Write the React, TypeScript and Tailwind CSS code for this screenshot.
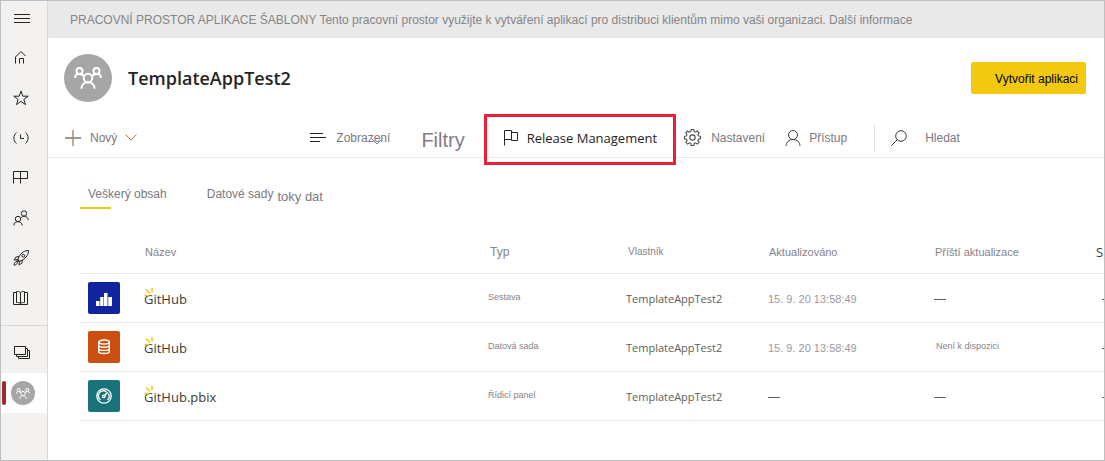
import type { ReactNode } from 'react';
import { clsx } from 'clsx';

interface IconProps {
  className?: string;
  children: ReactNode;
}

function Icon({ className = 'size-4', children }: IconProps) {
  return (
    <svg
      viewBox="0 0 16 16"
      fill="none"
      stroke="currentColor"
      strokeWidth={1}
      aria-hidden="true"
      className={clsx('shrink-0', className)}
    >
      {children}
    </svg>
  );
}

function ChevronDown({ className }: { className?: string }) {
  return (
    <svg
      viewBox="0 0 12 7"
      fill="none"
      stroke="currentColor"
      aria-hidden="true"
      className={clsx('h-[7px] w-3 shrink-0', className)}
    >
      <path d="M.5.5 6 6 11.5.5" />
    </svg>
  );
}

function WorkspaceAvatar({ className, iconClass }: { className: string; iconClass: string }) {
  return (
    <span
      className={clsx(
        'flex shrink-0 items-center justify-center rounded-full bg-[#a6a6a6] text-white',
        className
      )}
    >
      <svg
        viewBox="0 0 28 22"
        fill="none"
        stroke="currentColor"
        strokeWidth={2}
        aria-hidden="true"
        className={iconClass}
      >
        <circle cx="5.500" cy="4" r="3" />
        <circle cx="22.500" cy="4" r="3" />
        <circle cx="14" cy="11" r="4.300" />
        <path d="M1 11c0-2.600 2-4 4.500-4 1.800 0 3.500.8 4.500 2.500M27 11c0-2.600-2-4-4.500-4-1.800 0-3.500.8-4.500 2.500M7.500 21.800c0-4 2.800-6.500 6.500-6.500s6.500 2.500 6.500 6.500" />
      </svg>
    </span>
  );
}

const navItems = [
  {
    label: 'Home',
    icon: <path d="M2.500 13.500V7L8 1.500 12.500 6M6.500 13.500v-5h4v5" />,
  },
  {
    label: 'Favorites',
    icon: <path d="m8 1 1.800 5.200h5.400l-4.300 3.200 1.600 5.200L8 11.400l-4.500 3.200 1.600-5.200L.8 6.200h5.400z" />,
  },
  {
    label: 'Recent',
    icon: <path d="M3.500 2.500C0 5.500 0 10.500 3.500 13.500M12.500 2.500c3.500 3 3.500 8 0 11M7.500 4.500v4H11" />,
  },
  {
    label: 'Apps',
    icon: <path d="M.5 13.500v-12h14v7H.5M7.500 1.500v12" />,
  },
  {
    label: 'Shared with me',
    icon: (
      <>
        <circle cx="11" cy="3.500" r="2.700" />
        <circle cx="5" cy="9" r="2.700" />
        <path d="M.8 15.500c.2-2.400 1.800-3.800 4.200-3.800s4 1.400 4.200 3.800M8 8c.6-1.200 1.700-1.800 3-1.800 2.400 0 4 1.400 4.200 3.800" />
      </>
    ),
  },
  {
    label: 'Learn',
    icon: (
      <>
        <path d="M15.500.5c-4 0-7 2-9.500 6l-1 3.500 1.300 1.300L9.500 10c4-2.500 6-5.500 6-9.500zM6 6.500 3 7l-2 3 4-.5M9.500 10 9 13l-3 2 .4-3.700M5 8.500l-1.500 3.200L7.500 11" />
        <circle cx="10.300" cy="5.700" r="1.400" />
        <path d="M3.700 11.800c-1.800 0-2.400 1-2.700 3.300 2.200-.2 3.200-.9 3.300-2.700" />
      </>
    ),
  },
  {
    label: 'Workspaces',
    icon: (
      <path d="M7.500 2.500c-1-1-2.500-1-4-1v11c1.500 0 3 0 4 1 1-1 2.500-1 4-1v-11c-1.500 0-3 0-4 1zm0 0v12M3.500 2.500h-3v12h14v-12h-3" />
    ),
  },
];

function Sidebar() {
  return (
    <nav
      aria-label="Main"
      className="flex w-[47px] shrink-0 flex-col border-r border-[#d9d8d7] bg-[#f3f2f1] text-[#252423]"
    >
      <button
        type="button"
        aria-label="Menu"
        className="flex h-[37px] items-center justify-center pr-1"
      >
        <Icon>
          <path d="M0 2.500h16M0 6.500h16M0 10.500h16" />
        </Icon>
      </button>
      {navItems.map((item) => (
        <a
          key={item.label}
          href="#"
          aria-label={item.label}
          className="flex h-10 items-center justify-center pr-1.5"
        >
          <Icon>{item.icon}</Icon>
        </a>
      ))}
      <div className="mt-[7px] border-t border-[#d9d8d7] pt-[7px]">
        <a href="#" aria-label="All workspaces" className="flex h-10 items-center justify-center pr-1">
          <Icon>
            <path d="M.5 1.500h11v8H.5zM12 3.500h1.500v8h-11v-2M13.500 5.500h2v8h-11v-2" />
          </Icon>
        </a>
      </div>
      <a
        href="#"
        aria-label="TemplateAppTest2"
        aria-current="page"
        className="flex h-10 items-center gap-[5px] bg-white pl-px"
      >
        <span className="h-6 w-1 rounded-sm bg-[#a4262c]" />
        <WorkspaceAvatar className="size-6" iconClass="h-[11px] w-[14px]" />
      </a>
    </nav>
  );
}

function Toolbar() {
  return (
    <div className="flex h-10 items-center border-b border-[#eaeaea] pl-[17px] text-xs whitespace-nowrap text-[#7b7881]">
      <button type="button" className="flex items-center">
        <Icon className="mr-[9px] size-4">
          <path d="M0 8h16" className="stroke-[#777777]" strokeWidth={1.500} />
          <path d="M8 0v16" className="stroke-[#b98a55]" strokeWidth={1.500} />
        </Icon>
        Nový
        <ChevronDown className="ml-2 text-[#b5763a]" />
      </button>
      <button type="button" className="relative ml-[173px] flex items-center">
        <Icon className="mr-[10px] size-4 text-[#252423]">
          <path d="M0 3.500h13M0 7.500h16M0 11.500h10" />
        </Icon>
        Zobrazení
        <ChevronDown className="absolute right-[7px] bottom-px text-[#6d87a8]" />
      </button>
      <button type="button" className="ml-[31px] pt-1 text-xl text-[#85798a]">
        Filtry
      </button>
      <button
        type="button"
        className="relative ml-[38px] flex items-center pt-0.5 font-['Open_Sans',sans-serif] text-[13px] text-[#252423]"
      >
        <span className="absolute -inset-x-[19px] -top-[14px] -bottom-[18px] border-3 border-[#ef1c35]" />
        <Icon className="mr-2 size-4">
          <path d="M1.500 15.500V.5h7v9h-7M8.500 2.500h6v8h-6v-1" />
        </Icon>
        Release Management
      </button>
      <button type="button" className="ml-[27px] flex items-center">
        <Icon className="mr-[10px] size-[17px] text-[#4a4846]">
          <path d="m6.800.5-.4 2-1.300.5-1.700-1.100-1.700 1.700 1.100 1.700-.5 1.200-1.800.4v2.300l1.900.4.5 1.300-1.200 1.600 1.700 1.700L5.100 13l1.300.5.4 2h2.400l.4-2 1.300-.5 1.700 1.200 1.700-1.700-1.200-1.600.5-1.300 1.900-.4V6.900l-1.900-.4-.5-1.200 1.200-1.700-1.700-1.700L10.900 3l-1.300-.5-.4-2z" />
          <circle cx="8" cy="8" r="2.500" />
        </Icon>
        Nastavení
      </button>
      <button type="button" className="ml-5 flex items-center">
        <Icon className="mr-2 size-4 text-[#3b3a39]">
          <circle cx="8" cy="5" r="4.500" />
          <path d="M1 16c.2-4 3-6.500 7-6.500s6.800 2.500 7 6.500" />
        </Icon>
        Přístup
      </button>
      <span className="ml-[27px] h-7 border-l border-[#e1e1e1]" />
      <label className="ml-4 flex grow items-center">
        <Icon className="mr-[18px] size-4 text-[#3b3a39]">
          <circle cx="10" cy="6" r="5.300" />
          <path d="M6.200 9.800.3 15.700" />
        </Icon>
        <input
          type="search"
          aria-label="Hledat"
          placeholder="Hledat"
          className="w-full min-w-0 outline-none placeholder:text-[#7b7881]"
        />
      </label>
    </div>
  );
}

interface ContentRow {
  id: string;
  name: string;
  type: string;
  updated: string | null;
  nextRefresh: string | null;
  tile: string;
  icon: ReactNode;
}

const rows: ContentRow[] = [
  {
    id: 'report',
    name: 'GitHub',
    type: 'Sestava',
    updated: '15. 9. 20 13:58:49',
    nextRefresh: null,
    tile: 'bg-[#12239e]',
    icon: (
      <g stroke="none" fill="currentColor">
        <path d="M0 11h3.600v5H0z" />
        <path d="M4.200 7h3.300v9H4.200z" />
        <path d="M8 3h3.500v13H8z" />
        <path d="M12.200 7H16v9h-3.800z" />
      </g>
    ),
  },
  {
    id: 'dataset',
    name: 'GitHub',
    type: 'Datová sada',
    updated: '15. 9. 20 13:58:49',
    nextRefresh: 'Není k dispozici',
    tile: 'bg-[#ca5010]',
    icon: (
      <g strokeWidth={1.400}>
        <ellipse cx="8" cy="3" rx="5.300" ry="2" />
        <path d="M2.700 3v9.500c0 1.100 2.300 2 5.300 2s5.300-.9 5.300-2V3M2.700 6.200c0 1.100 2.300 2 5.300 2s5.300-.9 5.300-2M2.700 9.400c0 1.100 2.300 2 5.300 2s5.300-.9 5.300-2" />
      </g>
    ),
  },
  {
    id: 'dashboard',
    name: 'GitHub.pbix',
    type: 'Řídicí panel',
    updated: null,
    nextRefresh: null,
    tile: 'bg-[#197278]',
    icon: (
      <g strokeWidth={1.300}>
        <circle cx="8" cy="8" r="7.200" />
        <path d="M4.500 12A5 5 0 0 1 10.500 3.700M12.300 5.700A5 5 0 0 1 11.500 12" />
        <path d="m8.500 7.500 3.200-3.200" strokeWidth={1.600} />
        <circle cx="7.800" cy="8.400" r="1.300" />
      </g>
    ),
  },
];

function NewMarker() {
  return (
    <svg
      viewBox="0 0 9 9"
      fill="none"
      stroke="#f2c811"
      strokeWidth={1.500}
      aria-hidden="true"
      className="absolute -top-0.5 left-0 size-[9px]"
    >
      <path d="M2 1.500 6 5.500M8 0v4.500M.5 7.500h5" />
    </svg>
  );
}

function Dash() {
  return <span className="block w-3 border-t border-[#605e5c]" />;
}

function ContentTable() {
  return (
    <table className="w-full table-fixed text-left text-[11px] whitespace-nowrap text-[#85838a]">
      <colgroup>
        <col className="w-16" />
        <col />
        <col className="w-[138px]" />
        <col className="w-[142px]" />
        <col className="w-[166px]" />
        <col className="w-[162px]" />
        <col className="w-2" />
      </colgroup>
      <thead>
        <tr className="h-[43px] border-b border-[#eaeaea]">
          <td />
          <th className="pt-0.5 pl-px font-normal">Název</th>
          <th className="pt-0.5 pl-0.5 text-xs font-normal">Typ</th>
          <th className="pl-0.5 text-[10px] font-normal">Vlastník</th>
          <th className="pt-0.5 pl-px font-normal">Aktualizováno</th>
          <th className="pt-0.5 pl-px font-normal">Příští aktualizace</th>
          <th className="overflow-hidden pt-0.5 font-['Open_Sans',sans-serif] text-[13px] font-normal text-[#3b3a39]">
            S
          </th>
        </tr>
      </thead>
      <tbody>
        {rows.map((row) => (
          <tr key={row.id} className="h-[49px] border-b border-[#eaeaea]">
            <td className="pl-2">
              <span
                className={clsx(
                  'flex size-8 items-center justify-center rounded-xs text-white',
                  row.tile
                )}
              >
                <Icon>{row.icon}</Icon>
              </span>
            </td>
            <td className="pt-1 font-['Open_Sans',sans-serif] text-[13px] text-[#3b3a39]">
              <a href="#" className="relative">
                <NewMarker />
                {row.name}
              </a>
            </td>
            <td className="text-[9px]">{row.type}</td>
            <td className="pt-1 font-['Open_Sans',sans-serif] text-[11px] text-[#605e5c]">
              TemplateAppTest2
            </td>
            <td className="pt-1 text-[#9b999f]">{row.updated ?? <Dash />}</td>
            <td className={clsx(row.nextRefresh ? 'pl-0.5 text-[9px]' : 'pt-1')}>
              {row.nextRefresh ?? <Dash />}
            </td>
            <td className="overflow-hidden pt-1 pl-1.5">
              <Dash />
            </td>
          </tr>
        ))}
      </tbody>
    </table>
  );
}

export default function App() {
  return (
    <div className="flex min-h-screen border border-[#bfbfbf] bg-white font-['Liberation_Sans',Arial,sans-serif]">
      <Sidebar />
      <main className="flex min-w-0 grow flex-col">
        <p className="flex h-[37px] items-center overflow-hidden bg-[#e9e9e9] pl-[22px] text-xs whitespace-nowrap text-[#858585]">
          PRACOVNÍ PROSTOR APLIKACE ŠABLONY Tento pracovní prostor využijte k vytváření aplikací pro
          distribuci klientům mimo vaši organizaci. Další informace
        </p>
        <header className="flex items-center gap-4 py-4 pr-[18px] pl-4">
          <WorkspaceAvatar className="size-12" iconClass="h-[22px] w-7" />
          <h1 className="font-['Open_Sans',sans-serif] text-lg font-semibold text-[#252423]">
            TemplateAppTest2
          </h1>
          <button
            type="button"
            className="ml-auto h-8 rounded-xs bg-[#f2c811] pt-0.5 pr-2 pl-6 text-xs text-black"
          >
            Vytvořit aplikaci
          </button>
        </header>
        <Toolbar />
        <div className="pl-8">
          <div role="tablist" className="flex h-[72px] items-start pt-6 text-xs text-[#7b7881]">
            <button type="button" role="tab" aria-selected="true" className="pl-2">
              <span className="block h-[25px] pt-1">Veškerý obsah</span>
              <span className="-ml-2 block h-0.5 w-[31px] bg-[#f2c811]" />
            </button>
            <button type="button" role="tab" aria-selected="false" className="ml-10 flex gap-1 pt-1">
              Datové sady
              <span className="pt-0.5 text-[13px]">toky dat</span>
            </button>
          </div>
          <ContentTable />
        </div>
      </main>
    </div>
  );
}
